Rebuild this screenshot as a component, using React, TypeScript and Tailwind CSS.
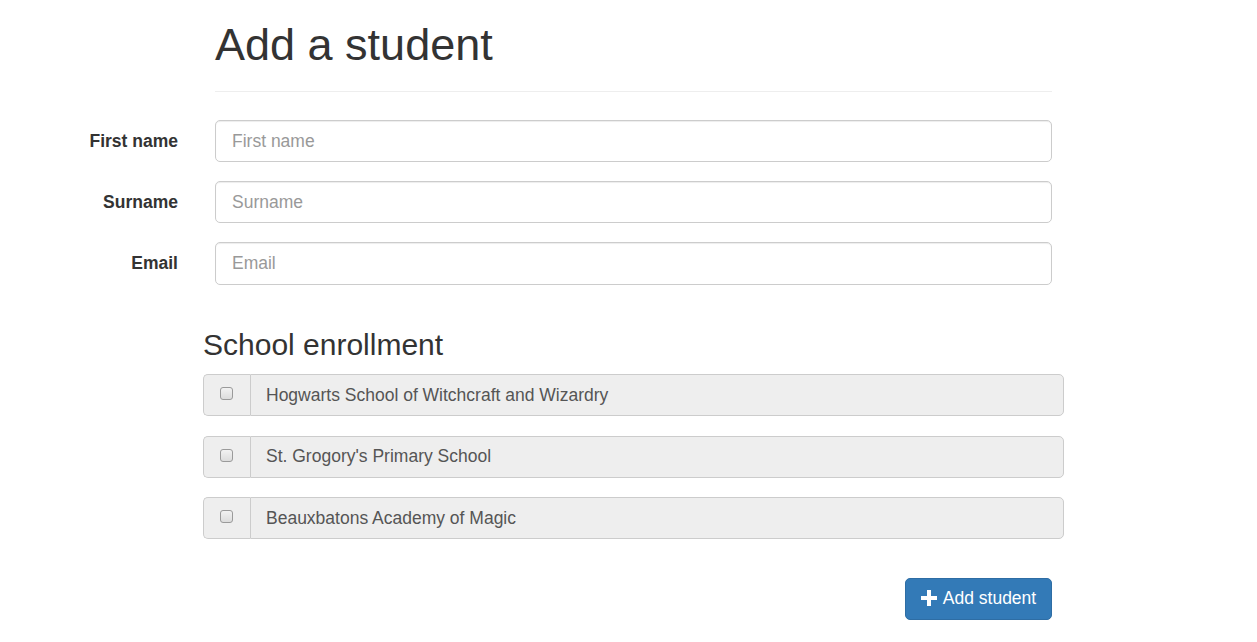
import React from "react";

const font = { fontFamily: "'Liberation Sans', Arial, Helvetica, sans-serif" };

function Field({ label, tall }: { label: string; tall?: boolean }) {
  return (
    <div className={`flex items-center ${tall ? "h-[43px]" : "h-[42px]"}`}>
      <label className="w-[178px] text-right text-[17.5px] font-bold text-[#333]">{label}</label>
      <input
        placeholder={label}
        className={`ml-[37px] w-[837px] rounded-[5px] border border-[#ccc] bg-white px-[16px] text-[17.5px] text-[#555] shadow-[inset_0_1px_1px_rgba(0,0,0,0.075)] outline-none placeholder:text-[#999] ${tall ? "h-[43px]" : "h-[42px]"}`}
      />
    </div>
  );
}

function School({ name }: { name: string }) {
  return (
    <div className="flex h-[42px] w-[861px]">
      <div className="flex w-[47px] items-center justify-center rounded-l-[5px] border-y border-l border-[#ccc] bg-[#eee]">
        <span className="-mt-[3px] -ml-[1px] block h-[13px] w-[13px] rounded-[3px] border border-[#9a9a9a] bg-gradient-to-b from-[#f2f2f2] to-[#dcdcdc]" />
      </div>
      <div className="flex flex-1 items-center rounded-r-[5px] border border-[#ccc] bg-[#eee] pl-[15px] text-[17.5px] text-[#555]">
        {name}
      </div>
    </div>
  );
}

export default function App() {
  return (
    <div className="min-h-[642px] bg-white text-[#333]" style={font}>
      <div className="ml-[215px] w-[837px] border-b border-[#eee] pt-[20px] pb-[22px]">
        <h1 className="text-[45px] leading-[49px] font-normal text-[#333]">Add a student</h1>
      </div>
      <div className="mt-[28px] flex flex-col gap-[19px]">
        <Field label="First name" />
        <Field label="Surname" />
        <Field label="Email" tall />
      </div>
      <div className="ml-[203px]">
        <h3 className="mt-[43px] text-[30px] leading-[33px] font-normal text-[#333]">School enrollment</h3>
        <div className="mt-[13px] flex flex-col gap-[19.5px]">
          <School name="Hogwarts School of Witchcraft and Wizardry" />
          <School name="St. Grogory's Primary School" />
          <School name="Beauxbatons Academy of Magic" />
        </div>
        <div className="mt-[39px] flex w-[849px] justify-end">
          <button className="flex h-[42px] w-[147px] items-center justify-center gap-[6px] rounded-[5px] border border-[#2e6da4] bg-[#337ab7] pb-[2px] text-[17.5px] text-white">
            <svg width="16" height="16" viewBox="0 0 16 16">
              <path d="M6 0h4v6h6v4h-6v6H6v-6H0V6h6z" fill="white" />
            </svg>
            <span>Add student</span>
          </button>
        </div>
      </div>
    </div>
  );
}
